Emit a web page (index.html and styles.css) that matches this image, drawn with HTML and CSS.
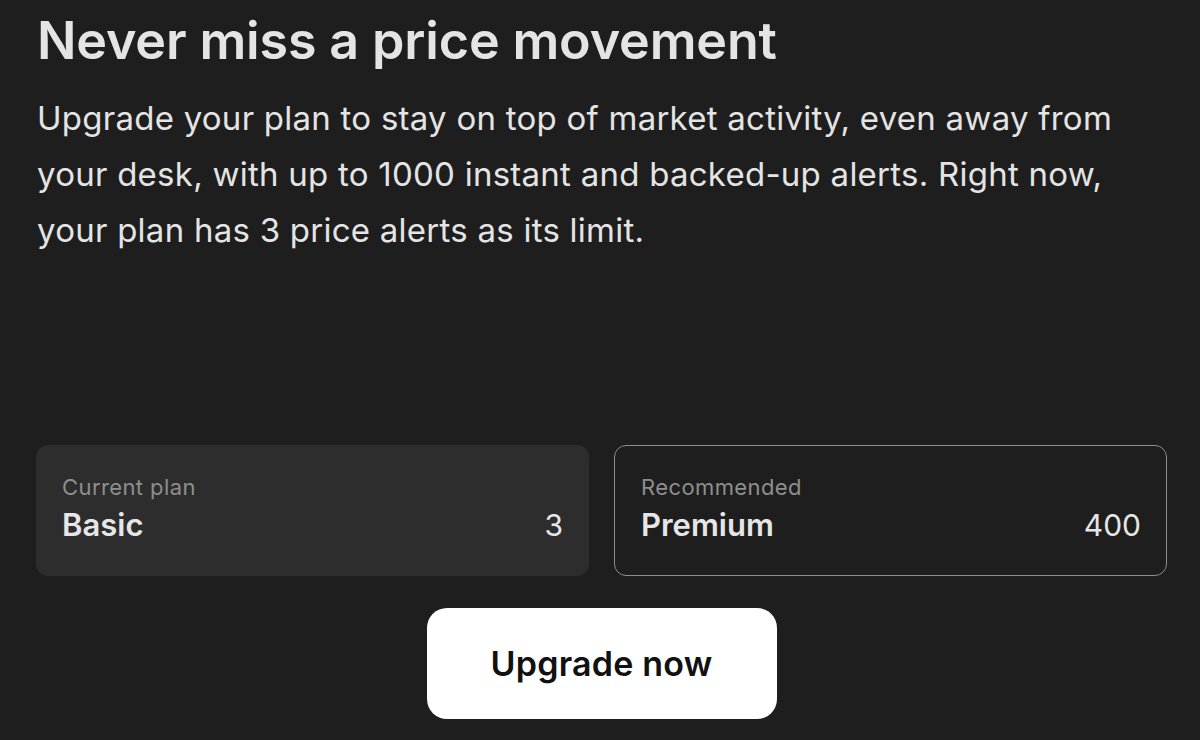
FILE: index.html
```html
<!DOCTYPE html>
<html lang="en">
<head>
<meta charset="utf-8">
<title>Upgrade</title>
<link rel="stylesheet" href="styles.css">
</head>
<body>
<main class="page">
  <h1 class="title">Never miss a price movement</h1>
  <p class="lead">Upgrade your plan to stay on top of market activity, even away from your desk, with up to 1000 instant and backed-up alerts. Right now, your plan has 3 price alerts as its limit.</p>
  <section class="plans">
    <div class="plan plan-current">
      <div class="plan-label">Current plan</div>
      <div class="plan-row"><span class="plan-name">Basic</span><span class="plan-value">3</span></div>
    </div>
    <div class="plan plan-recommended">
      <div class="plan-label">Recommended</div>
      <div class="plan-row"><span class="plan-name">Premium</span><span class="plan-value">400</span></div>
    </div>
  </section>
  <div class="actions">
    <button class="upgrade-btn" type="button">Upgrade now</button>
  </div>
</main>
</body>
</html>
```
FILE: styles.css
```css
html, body {
  margin: 0;
  padding: 0;
  background: #1e1e1e;
}
body {
  font-family: Inter, "Noto Sans", "Liberation Sans", sans-serif;
  color: #e4e4e4;
  width: 1200px;
  height: 740px;
  overflow: hidden;
}
.page {
  padding: 0 33px 0 36px;
  display: flex;
  flex-direction: column;
}
.title {
  margin: 10px 0 0 1px;
  font-size: 52px;
  line-height: 62px;
  font-weight: 600;
  letter-spacing: -0.15px;
  color: #e4e4e4;
}
.lead {
  margin: 18px 27px 0 1px;
  font-size: 33px;
  line-height: 56px;
  font-weight: 400;
  letter-spacing: 0.25px;
  color: #e4e4e4;
}
.plans {
  margin-top: 187px;
  display: grid;
  grid-template-columns: 1fr 1fr;
  gap: 25px;
}
.plan {
  box-sizing: border-box;
  height: 131px;
  border-radius: 12px;
  padding: 28px 26px 0 26px;
}
.plan-current {
  background: #2d2d2d;
}
.plan-recommended {
  background: #1e1e1e;
  border: 1.5px solid #8e8e8e;
  padding-top: 27px;
  padding-right: 25px;
}
.plan-label {
  font-size: 22px;
  line-height: 28px;
  letter-spacing: 0.4px;
  color: #8e8e8e;
}
.plan-row {
  display: flex;
  justify-content: space-between;
  align-items: baseline;
  margin-top: 5px;
}
.plan-name {
  font-size: 31px;
  line-height: 38px;
  font-weight: 600;
  color: #e6e6e6;
}
.plan-value {
  font-size: 30px;
  line-height: 38px;
  font-weight: 400;
  color: #e6e6e6;
}
.actions {
  display: flex;
  justify-content: center;
  margin-top: 32px;
}
.upgrade-btn {
  width: 350px;
  height: 111px;
  border: none;
  border-radius: 20px;
  background: #ffffff;
  color: #111111;
  font-family: Inter, "Noto Sans", "Liberation Sans", sans-serif;
  font-size: 34px;
  font-weight: 600;
  letter-spacing: 0.2px;
  cursor: pointer;
}
```
